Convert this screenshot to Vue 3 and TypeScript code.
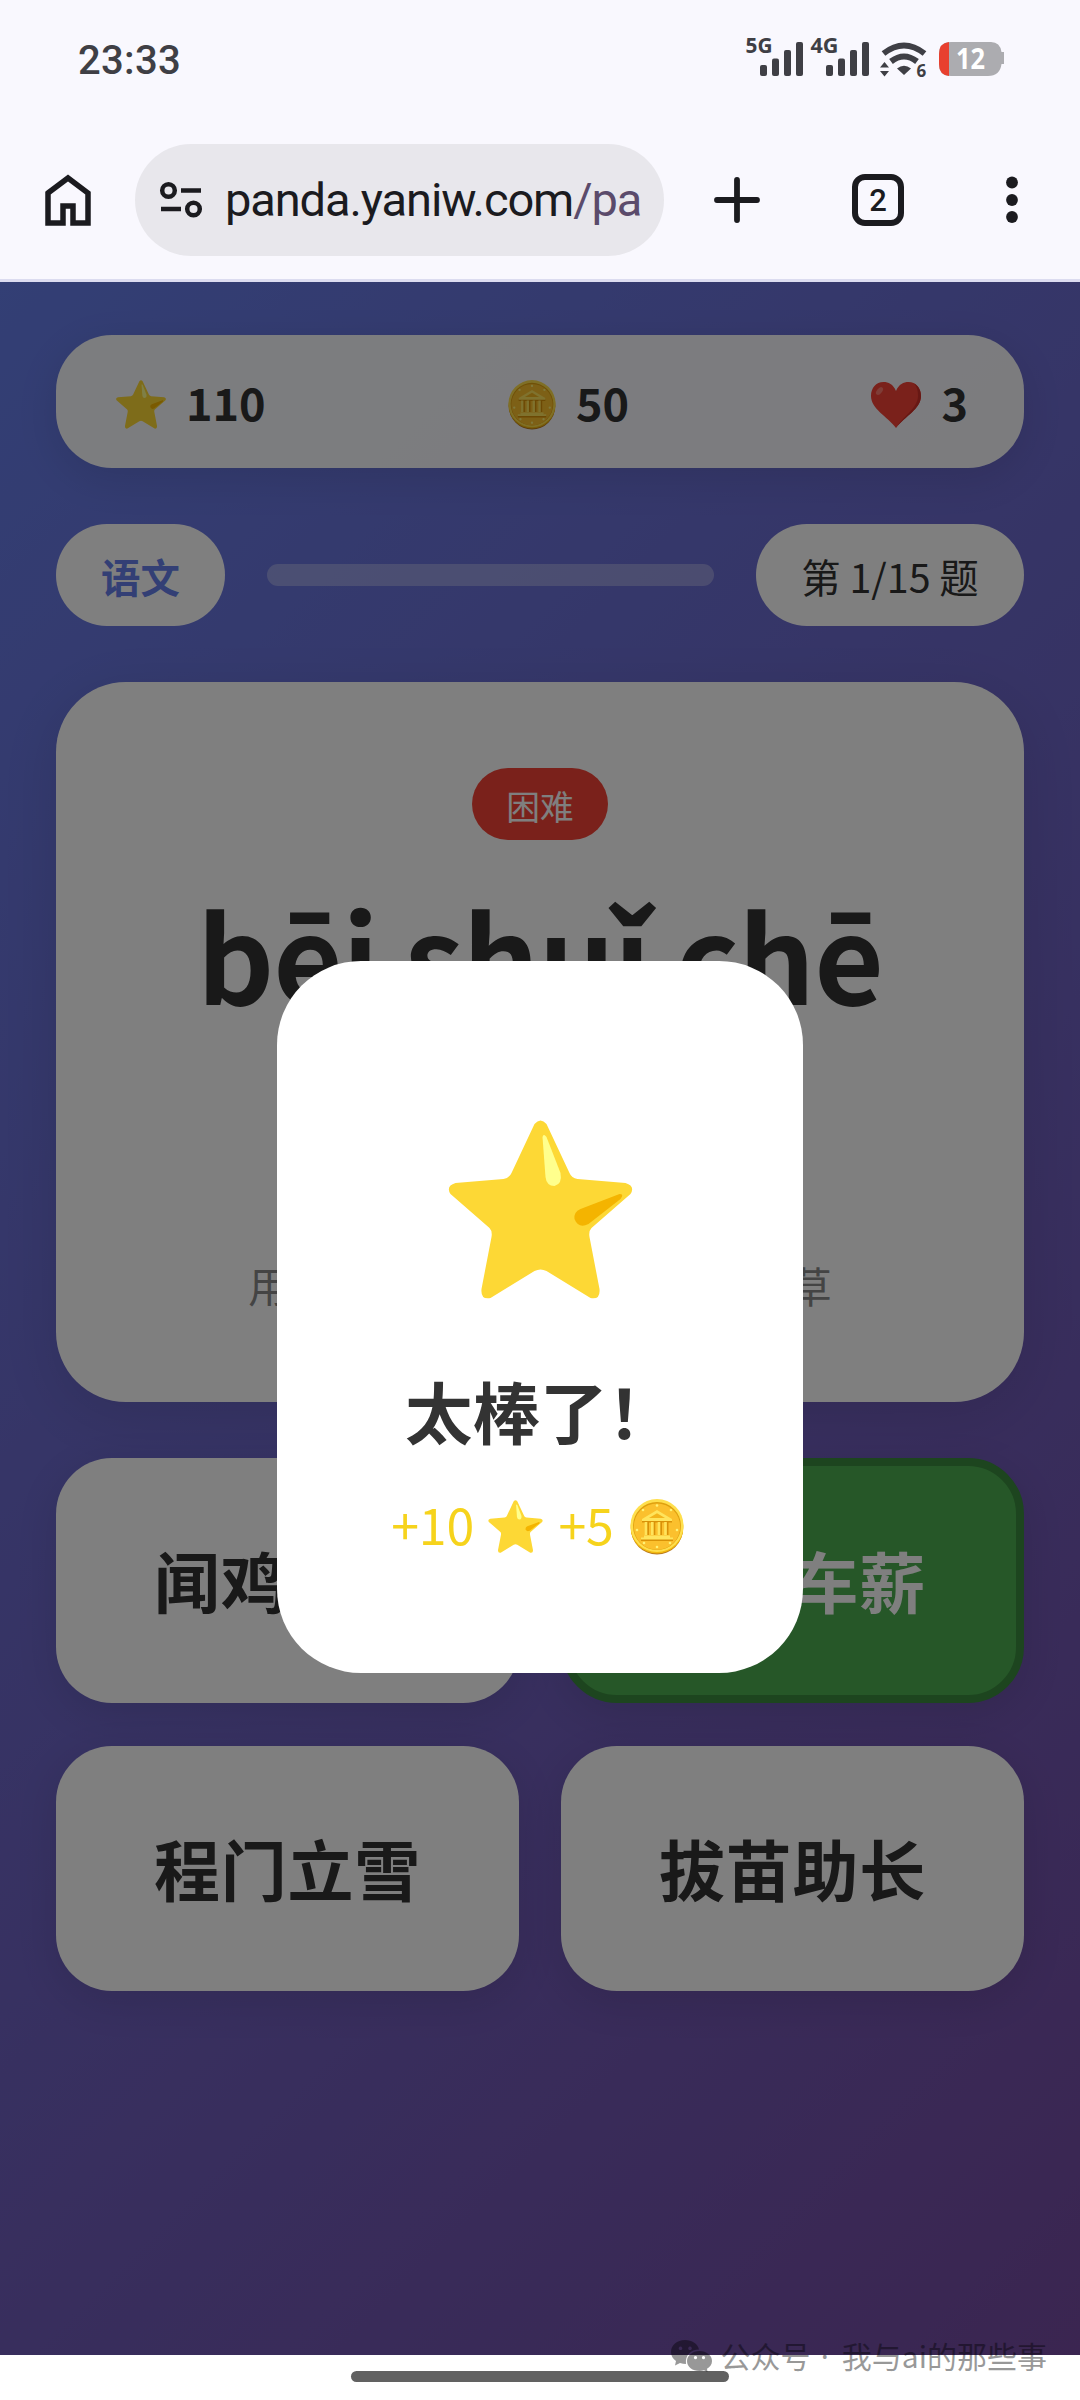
<script setup lang="ts">
interface Option {
  text: string
  correct?: boolean
}

const options: Option[] = [
  { text: '闻鸡起舞' },
  { text: '杯水车薪', correct: true },
  { text: '程门立雪' },
  { text: '拔苗助长' },
]

const stats = [
  { icon: 'star', value: 110 },
  { icon: 'coin', value: 50 },
  { icon: 'heart', value: 3 },
]
</script>

<template>
  <div class="screen">
    <svg class="defs" width="0" height="0" aria-hidden="true">
      <symbol id="star" viewBox="0 0 184 179">
        <path
          d="M86 4Q92 -3 98 4L121 53Q123 58 129 59L177 63Q187 66 182 74L143 108Q140 111 141 117L151 169Q152 180 142 178L98 151Q92 148 86 151L42 178Q32 180 33 169L43 117Q44 111 41 108L2 74Q-3 66 7 63L55 59Q61 58 63 53Z"
          fill="#fdd835"
        />
        <path d="M94 17Q95 13 98 17L112 53Q114 64 106 66Q98 66 97 57Z" fill="#ffff8d" />
        <path d="M171 74Q176 74 172 79L140 104Q130 109 126 99Q125 92 132 89Z" fill="#f4b400" />
      </symbol>
      <symbol id="coin" viewBox="0 0 54 56">
        <ellipse cx="27" cy="29.5" rx="26" ry="26" fill="#b8781c" />
        <ellipse cx="27" cy="28.5" rx="26.4" ry="26" fill="#f2b90f" />
        <circle cx="27" cy="26.5" r="26.5" fill="#ffdf4d" />
        <circle cx="27" cy="27" r="24" fill="#dfa00f" />
        <circle cx="27" cy="27.6" r="23.2" fill="#fbc02d" />
        <g fill="#fff176">
          <circle cx="27" cy="6.5" r="1.3" /><circle cx="13" cy="11" r="1.3" /><circle cx="41" cy="11" r="1.3" />
          <circle cx="7" cy="31" r="1.3" /><circle cx="47" cy="31" r="1.3" />
          <circle cx="14" cy="44" r="1.3" /><circle cx="40" cy="44" r="1.3" /><circle cx="27" cy="48" r="1.3" />
        </g>
        <path d="M12 21L27 12L42 21V23.5H12ZM14 38H40V40H43V42H11V40H14Z" fill="#d99208" />
        <path d="M12 20L27 11L42 20V22H12ZM14 36.5H40V38.5H43V40.5H11V38.5H14Z" fill="#ffe45c" />
        <path d="M19 19L27 14.3L35 19Z" fill="#f3b51d" />
        <path d="M18 23V36M24.3 23V36M31 23V36M37.5 23V36" stroke="#d99208" stroke-width="2" />
        <path d="M16 23V36M22.3 23V36M29 23V36M35.5 23V36" stroke="#ffe45c" stroke-width="2.6" />
      </symbol>
      <symbol id="heart" viewBox="0 0 50 46">
        <path
          d="M25 9C22 2 17.500 0 12.500 0C5 0 0 6 0 14C0 27 16 34 25 46C34 34 50 27 50 14C50 6 45 0 37.500 0C32.500 0 28 2 25 9Z"
          fill="#f44336"
        />
        <path
          d="M43 1.500C47.500 4 50 8.500 50 14C50 27 34 34 25 46C31 35 46.500 27 47 14C47 9 46 4.500 43 1.500Z"
          fill="#cf3029"
        />
        <ellipse cx="8.500" cy="9" rx="2.600" ry="4.600" transform="rotate(38 8.500 9)" fill="#ff7a6e" />
      </symbol>
    </svg>

    <header class="chrome">
      <div class="status">
        <span class="time">23:33</span>
        <svg class="status-icons" width="266" height="72" viewBox="742 23 266 72">
          <g fill="#3f3f45">
            <text x="745.500" y="53" class="net" textLength="27" lengthAdjust="spacingAndGlyphs">5G</text>
            <rect x="760" y="65" width="7" height="11" rx="2" />
            <rect x="772" y="58.500" width="7" height="17.500" rx="2" />
            <rect x="784" y="50" width="7" height="26" rx="2" />
            <rect x="796" y="42" width="7" height="34" rx="2" />
            <text x="810.500" y="53" class="net" textLength="28" lengthAdjust="spacingAndGlyphs">4G</text>
            <rect x="826" y="65" width="7" height="11" rx="2" />
            <rect x="838" y="58.500" width="7" height="17.500" rx="2" />
            <rect x="850" y="50" width="7" height="26" rx="2" />
            <rect x="862" y="42" width="7" height="34" rx="2" />
            <path d="M904 75L897 68.500Q904 63 911 68.500Z" />
            <path d="M884.500 62L889 67.500H880ZM884.500 76.500L889 71H880Z" />
            <text x="916.500" y="76.500" class="gen">6</text>
          </g>
          <g fill="none" stroke="#3f3f45" stroke-width="6">
            <path d="M883.500 53.500Q904 37.500 924.500 53.500" />
            <path d="M891 61.500Q904 51.500 917 61.500" />
          </g>
          <path
            d="M951 42H991Q1000 42 1001.500 52H1004V64H1001.500Q1000 76 988 76H951Q939 76 939 64V54Q939 42 951 42Z"
            fill="#acacb0"
          />
          <path d="M949 42V76Q939 75 939 64V54Q939 43 949 42Z" fill="#e8402f" />
          <text x="956" y="69" class="level" textLength="29" lengthAdjust="spacingAndGlyphs">12</text>
        </svg>
      </div>
      <div class="toolbar">
        <svg class="home" width="48" height="54" viewBox="0 0 48 54">
          <path
            d="M4 20L24 5L44 20V50H29V33H19V50H4Z"
            fill="none"
            stroke="#1b1b1f"
            stroke-width="5.500"
          />
        </svg>
        <div class="address">
          <svg width="44" height="38" viewBox="0 0 44 38" fill="none" stroke="#1b1b1f" stroke-width="4.500">
            <circle cx="9.500" cy="9.500" r="6.300" />
            <circle cx="34.500" cy="28" r="6.300" />
            <path d="M22 9.500H42M2 28H22" />
          </svg>
          <span class="url">panda.yaniw.com<i>/pa</i></span>
        </div>
        <svg class="plus" width="48" height="48" viewBox="0 0 48 48">
          <path d="M24 4V44M4 24H44" stroke="#1b1b1f" stroke-width="5.800" stroke-linecap="round" />
        </svg>
        <span class="tabs">2</span>
        <svg class="more" width="12" height="48" viewBox="0 0 12 48" fill="#1b1b1f">
          <circle cx="6" cy="6.500" r="5.900" />
          <circle cx="6" cy="24" r="5.900" />
          <circle cx="6" cy="41" r="5.900" />
        </svg>
      </div>
    </header>

    <main class="game">
      <section class="stats">
        <div v-for="s in stats" :key="s.icon" class="stat">
          <svg :class="s.icon"><use :href="'#' + s.icon" /></svg>
          <span>{{ s.value }}</span>
        </div>
      </section>

      <section class="progress-row">
        <span class="pill subject">语文</span>
        <span class="track"></span>
        <span class="pill counter">第 1/15 题</span>
      </section>

      <section class="question">
        <span class="badge">困难</span>
        <h1>bēi shuǐ chē</h1>
        <p>用一杯水去扑灭一车着火的柴草</p>
      </section>

      <section class="options">
        <button v-for="o in options" :key="o.text" :class="{ correct: o.correct }">{{ o.text }}</button>
      </section>

      <div class="overlay">
        <div class="modal">
          <svg class="big-star"><use href="#star" /></svg>
          <h2>太棒了！</h2>
          <div class="reward">
            <span class="ten">+10</span>
            <svg class="star"><use href="#star" /></svg>
            <span class="five">+5</span>
            <svg class="coin"><use href="#coin" /></svg>
          </div>
        </div>
      </div>
    </main>

    <footer class="nav"><span></span></footer>

    <div class="watermark">
      <svg width="41" height="32" viewBox="0 0 41 32">
        <path
          fill-rule="evenodd"
          d="M14 0C6 0 0 5 0 12C0 16 2 19 5 21L4 25.500L9 23Q12 24 15 24C14 15 20 9.500 28 9.500C27 4 21 0 14 0ZM9.500 6.500A1.800 1.800 0 1 1 9.490 6.500ZM19 6.500A1.800 1.800 0 1 1 18.990 6.500Z"
        />
        <path
          fill-rule="evenodd"
          d="M28.500 11C21.500 11 16 15.500 16 21C16 27 21.500 31 28.500 31Q31 31 33 30.300L36.500 32L36 28.800C39 27 41 24.500 41 21C41 15.500 35.500 11 28.500 11ZM24.500 16A1.600 1.600 0 1 1 24.490 16ZM32.500 16A1.600 1.600 0 1 1 32.490 16Z"
        />
      </svg>
      <span>公众号<i> · </i>我与ai的那些事</span>
    </div>
  </div>
</template>

<style>
body {
  margin: 0;
}
</style>

<style scoped>
.screen {
  position: relative;
  width: 1080px;
  height: 2400px;
  overflow: hidden;
  display: flex;
  flex-direction: column;
  background: #fff;
  font-family: 'Noto Sans CJK SC', sans-serif;
}
.defs {
  position: absolute;
}
svg {
  display: block;
  flex: none;
}
.chrome {
  box-sizing: border-box;
  height: 282px;
  flex: none;
  background: #f9f8fe;
  border-bottom: 3px solid #dcdcf0;
}
.status {
  height: 118px;
  padding: 0 72px 0 78px;
  display: flex;
  align-items: center;
  justify-content: space-between;
}
.time {
  margin-top: 3px;
  font: 500 40px/48px Roboto, sans-serif;
  letter-spacing: 0.3px;
  color: #3f3f45;
}
.net {
  font: 700 20.5px 'Open Sans', sans-serif;
}
.gen {
  font: 700 17px 'Open Sans', sans-serif;
}
.level {
  font: 700 28px 'Open Sans', sans-serif;
  fill: #fff;
}
.toolbar {
  height: 164px;
  display: flex;
  align-items: center;
  padding-left: 44px;
}
.address {
  box-sizing: border-box;
  width: 529px;
  height: 112px;
  margin-left: 43px;
  padding-left: 24px;
  border-radius: 56px;
  background: #e8e7ec;
  display: flex;
  align-items: center;
}
.url {
  margin-left: 22px;
  font: 400 47px/56px Roboto, sans-serif;
  letter-spacing: -1.1px;
  white-space: nowrap;
  color: #1b1b1f;
}
.url i {
  font-style: normal;
  color: #5b4b6b;
}
.plus {
  margin-left: 49px;
}
.tabs {
  box-sizing: border-box;
  width: 52px;
  height: 52px;
  margin-left: 91px;
  border: 6px solid #1b1b1f;
  border-radius: 13px;
  font: 500 31px/41px Roboto, sans-serif;
  text-align: center;
  color: #1b1b1f;
}
.more {
  margin-left: 102px;
}
.game {
  position: relative;
  box-sizing: border-box;
  height: 2073px;
  flex: none;
  padding: 53px 56px 0;
  display: flex;
  flex-direction: column;
  background: linear-gradient(135deg, #667eea 0%, #764ba2 100%);
}
.stats {
  box-sizing: border-box;
  height: 133px;
  flex: none;
  padding: 0 56px 0 60px;
  border-radius: 56px;
  background: rgba(255, 255, 255, 0.96);
  box-shadow: 0 11px 42px rgba(0, 0, 0, 0.1);
  display: flex;
  align-items: center;
  justify-content: space-between;
}
.stat {
  display: flex;
  align-items: center;
  font-size: 45px;
  line-height: 64px;
  font-weight: 700;
  color: #333;
}
.stat svg {
  margin-right: 20px;
  margin-top: 6px;
}
.stat .star {
  width: 50px;
  height: 49px;
}
.stat .coin {
  width: 48px;
  height: 50px;
}
.stat .heart {
  width: 50px;
  height: 46px;
}
.progress-row {
  margin-top: 56px;
  height: 102px;
  display: flex;
  align-items: center;
  gap: 42px;
}
.pill {
  box-sizing: border-box;
  height: 102px;
  border-radius: 51px;
  background: #fff;
  text-align: center;
  font-size: 39.4px;
  line-height: 103px;
  color: #333;
}
.subject {
  width: 169px;
  font-weight: 700;
  color: #667eea;
}
.counter {
  width: 268px;
}
.track {
  flex: 1;
  height: 22px;
  border-radius: 11px;
  background: rgba(255, 255, 255, 0.3);
}
.question {
  box-sizing: border-box;
  margin-top: 56px;
  height: 720px;
  padding-top: 86px;
  border-radius: 70px;
  background: #fff;
  box-shadow: 0 14px 56px rgba(0, 0, 0, 0.1);
  display: flex;
  flex-direction: column;
  align-items: center;
}
.badge {
  width: 136px;
  height: 72px;
  border-radius: 36px;
  background: #f44336;
  color: #fff;
  text-align: center;
  font-size: 33.75px;
  line-height: 75px;
}
h1 {
  margin: 33px 0 0;
  font-size: 120px;
  line-height: 160px;
  letter-spacing: -0.9px;
  font-weight: 700;
  white-space: nowrap;
  color: #333;
}
p {
  margin: 222px 0 0;
  font-size: 41.7px;
  line-height: 60px;
  color: #888;
}
.options {
  margin-top: 56px;
  display: grid;
  grid-template-columns: 1fr 1fr;
  grid-auto-rows: 245px;
  gap: 43px 42px;
}
button {
  box-sizing: border-box;
  padding: 0 0 4px;
  border: 0;
  border-radius: 56px;
  background: #fff;
  box-shadow: 0 11px 42px rgba(0, 0, 0, 0.1);
  font-family: inherit;
  font-size: 66px;
  letter-spacing: 0.8px;
  font-weight: 700;
  color: #333;
}
button.correct {
  border: 8px solid #3a8a3e;
  background: #4caf50;
  color: #fff;
}
.overlay {
  position: absolute;
  inset: 0;
  display: flex;
  justify-content: center;
  align-items: center;
  background: rgba(0, 0, 0, 0.5);
}
.modal {
  box-sizing: border-box;
  width: 526px;
  height: 712px;
  margin-bottom: 3px;
  padding-top: 159px;
  border-radius: 84px;
  background: #fff;
  display: flex;
  flex-direction: column;
  align-items: center;
}
.big-star {
  width: 185px;
  height: 179px;
}
h2 {
  margin: 61px 0 0;
  font-size: 67.5px;
  line-height: 100px;
  font-weight: 700;
  color: #333;
}
.reward {
  margin: 28px 4px 0 0;
  height: 70px;
  display: flex;
  align-items: center;
  font-size: 50px;
  line-height: 70px;
  color: #f6d31c;
}
.reward .ten {
  margin-left: -1px;
}
.reward .star {
  width: 55px;
  height: 53px;
  margin: 6px 15px 0 14px;
}
.reward .coin {
  width: 54px;
  height: 56px;
  margin: 7px 0 0 16px;
}
.nav {
  flex: 1;
  display: flex;
  justify-content: center;
  padding-top: 16px;
}
.nav span {
  width: 378px;
  height: 11px;
  border-radius: 6px;
  background: #616161;
}
.watermark {
  position: absolute;
  right: 33px;
  top: 2334px;
  height: 44px;
  display: flex;
  align-items: center;
  gap: 8px;
  opacity: 0.4;
  color: #000;
  font-size: 30px;
  line-height: 44px;
  white-space: nowrap;
}
.watermark i {
  font-family: 'Noto Sans', sans-serif;
  font-style: normal;
  letter-spacing: 2.6px;
}
</style>
